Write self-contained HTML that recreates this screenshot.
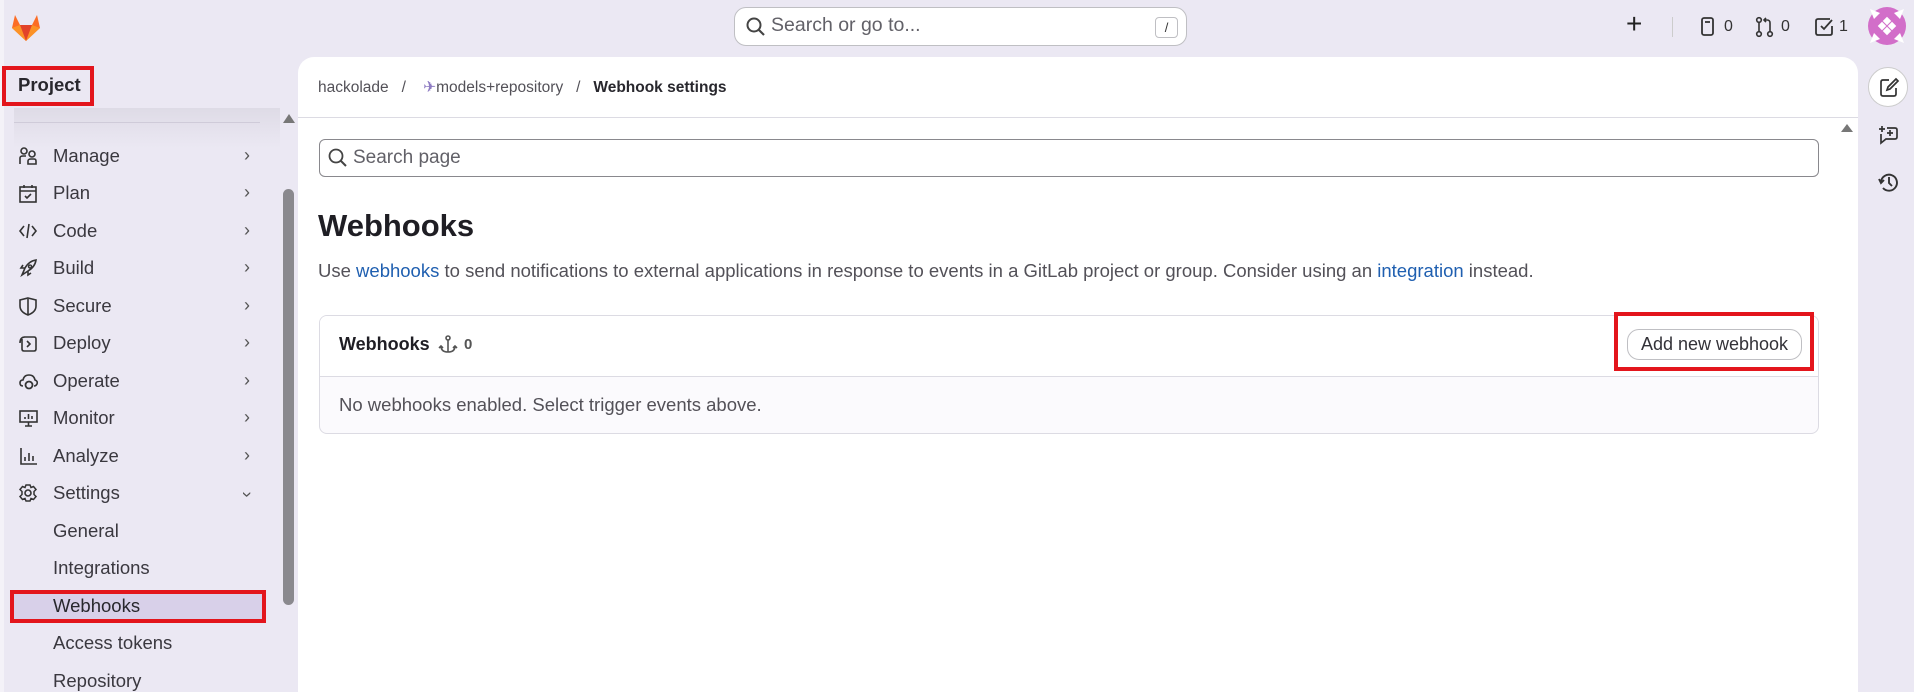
<!DOCTYPE html>
<html><head><meta charset="utf-8"><style>
*{box-sizing:border-box;margin:0;padding:0}
html,body{width:1914px;height:692px;overflow:hidden}
body{background:#ebe8f3;font-family:"Liberation Sans",sans-serif;color:#333238;position:relative}
.a{position:absolute}
.nav{font-size:18.5px;color:#3a383f;left:53px}
.ic{position:absolute;left:19px;width:20px;height:20px}
.chev{position:absolute;left:244px;font-size:18px;color:#555}
svg{overflow:visible}
</style></head><body>
<div class="a" style="left:0;top:0;width:4px;height:692px;background:#f4f2f8"></div>
<svg class="a" style="left:10px;top:11px" width="32" height="32" viewBox="0 0 32 32"><path d="M16 30 L2 17 L5 4 L10 14 H22 L27 4 L30 17 Z" fill="#fc6d26"/><path d="M16 30 L10 14 H22 Z" fill="#e24329"/><path d="M16 30 L2 17 L10 14Z" fill="#fca326" opacity=".7"/><path d="M16 30 L30 17 L22 14Z" fill="#fca326" opacity=".7"/></svg>
<div class="a" style="left:734px;top:7px;width:453px;height:39px;background:#fff;border:1px solid #bfbfc3;border-radius:12px"></div>
<svg class="a" style="left:746px;top:17px" width="20" height="20" viewBox="0 0 20 20"><circle cx="8" cy="8" r="6.5" fill="none" stroke="#444" stroke-width="2"/><path d="M13 13 L18 18" stroke="#444" stroke-width="2.2"/></svg>
<div class="a" style="left:771px;top:14px;font-size:19.5px;color:#626168">Search or go to...</div>
<div class="a" style="left:1155px;top:17px;width:23px;height:21px;border:1px solid #bfbfc3;border-radius:4px;font-size:13px;text-align:center;line-height:19px;color:#333">/</div>
<div class="a" style="left:1626px;top:8px;font-size:28px;color:#222">+</div>
<div class="a" style="left:1672px;top:17px;width:1px;height:20px;background:#ccc"></div>
<svg class="a" style="left:1701px;top:17px" width="14" height="20"><rect x="1" y="1" width="11" height="17" rx="2" fill="none" stroke="#333" stroke-width="1.8"/><path d="M4 5H9" stroke="#333" stroke-width="1.8"/></svg>
<div class="a" style="left:1724px;top:18px;font-size:16px;color:#333">0</div>
<svg class="a" style="left:1755px;top:17px" width="20" height="20"><circle cx="4" cy="3" r="2.3" fill="none" stroke="#333" stroke-width="1.6"/><circle cx="4" cy="17" r="2.3" fill="none" stroke="#333" stroke-width="1.6"/><circle cx="15" cy="17" r="2.3" fill="none" stroke="#333" stroke-width="1.6"/><path d="M4 5.5V14.5M15 14.5V6Q15 3 12 3H9M11 1L9 3 11 5" fill="none" stroke="#333" stroke-width="1.6"/></svg>
<div class="a" style="left:1781px;top:18px;font-size:16px;color:#333">0</div>
<svg class="a" style="left:1815px;top:17px" width="20" height="20"><path d="M17 9V16Q17 18 15 18H3Q1 18 1 16V4Q1 2 3 2H15" fill="none" stroke="#333" stroke-width="1.8"/><path d="M6 9L9 12 17 3" fill="none" stroke="#333" stroke-width="1.8"/></svg>
<div class="a" style="left:1839px;top:18px;font-size:16px;color:#333">1</div>
<svg class="a" style="left:1868px;top:7px" width="38" height="38" viewBox="0 0 38 38"><circle cx="19" cy="19" r="19" fill="#d26ec9"/><g fill="#fff"><path d="M2 2L12 6 6 12Z"/><path d="M36 2L26 6 32 12Z"/><path d="M2 36L12 32 6 26Z"/><path d="M36 36L26 32 32 26Z"/><rect x="16" y="11" width="6" height="6" transform="rotate(45 19 14)"/><rect x="16" y="21" width="6" height="6" transform="rotate(45 19 24)"/><rect x="11" y="16" width="6" height="6" transform="rotate(45 14 19)"/><rect x="21" y="16" width="6" height="6" transform="rotate(45 24 19)"/></g></svg>
<div class="a" style="left:2px;top:66px;width:92px;height:40px;border:4px solid #e3151c"></div>
<div class="a" style="left:18px;top:74px;font-size:18.5px;font-weight:bold;color:#28272d">Project</div>
<div class="a" style="left:14px;top:108px;width:266px;height:40px;background:linear-gradient(#dedbe6,#ebe8f3)"></div>
<div class="a" style="left:14px;top:122px;width:246px;height:1px;background:#cfcbd9"></div>
<div class="a" style="left:283px;top:114px;border-left:6px solid transparent;border-right:6px solid transparent;border-bottom:9px solid #777"></div>
<div class="a" style="left:283px;top:189px;width:11px;height:416px;background:#8a898e;border-radius:6px"></div>
<div class="a nav" style="top:145px">Manage</div><div class="chev" style="top:145px">›</div>
<div class="a nav" style="top:182px">Plan</div><div class="chev" style="top:182px">›</div>
<div class="a nav" style="top:220px">Code</div><div class="chev" style="top:220px">›</div>
<div class="a nav" style="top:257px">Build</div><div class="chev" style="top:257px">›</div>
<div class="a nav" style="top:295px">Secure</div><div class="chev" style="top:295px">›</div>
<div class="a nav" style="top:332px">Deploy</div><div class="chev" style="top:332px">›</div>
<div class="a nav" style="top:370px">Operate</div><div class="chev" style="top:370px">›</div>
<div class="a nav" style="top:407px">Monitor</div><div class="chev" style="top:407px">›</div>
<div class="a nav" style="top:445px">Analyze</div><div class="chev" style="top:445px">›</div>
<div class="a nav" style="top:482px">Settings</div><div class="chev" style="top:484px;transform:rotate(90deg)">›</div>
<div class="a nav" style="top:520px">General</div>
<div class="a nav" style="top:557px">Integrations</div>
<div class="a" style="left:10px;top:590px;width:256px;height:33px;border:4px solid #e3151c;background:#d8d0e9"></div>
<div class="a nav" style="top:595px;color:#28272d">Webhooks</div>
<div class="a nav" style="top:632px">Access tokens</div>
<div class="a nav" style="top:670px">Repository</div>
<svg class="ic" style="top:147px"><circle cx="5" cy="4" r="3" fill="none" stroke="#333" stroke-width="1.6"/><circle cx="13" cy="7" r="3" fill="none" stroke="#333" stroke-width="1.6"/><path d="M1 17V11Q1 9 4 9H7M9 17V14Q9 12 12 12H15Q17 12 17 14V17Z" fill="none" stroke="#333" stroke-width="1.6"/></svg>
<svg class="ic" style="top:184px"><rect x="1" y="3" width="16" height="15" fill="none" stroke="#333" stroke-width="1.6"/><path d="M1 7H17M5 1V4M13 1V4M6 12L8 14 12 10" fill="none" stroke="#333" stroke-width="1.6"/></svg>
<svg class="ic" style="top:222px"><path d="M5 4L1 9 5 14M13 4L17 9 13 14M10 2L8 16" fill="none" stroke="#333" stroke-width="1.6"/></svg>
<svg class="ic" style="top:259px"><path d="M3 16L6 9Q10 2 17 1Q16 8 9 12L3 16ZM11 6A1.5 1.5 0 1 0 11.1 6M6 9L2 9 4 6M9 12L9 16 12 14" fill="none" stroke="#333" stroke-width="1.6"/></svg>
<svg class="ic" style="top:297px"><path d="M9 1L17 3V9Q17 15 9 18Q1 15 1 9V3Z M9 2V17" fill="none" stroke="#333" stroke-width="1.6"/></svg>
<svg class="ic" style="top:334px"><path d="M3 5V15Q3 17 5 17H15Q17 17 17 15V5Q17 3 15 3H5M1 9Q1 3 6 3M8 7L11 10 8 13" fill="none" stroke="#333" stroke-width="1.6"/></svg>
<svg class="ic" style="top:372px"><path d="M4 14Q1 14 1 11Q1 8 4 8Q5 3 10 3Q15 3 16 8Q19 9 18 12Q17 14 15 14" fill="none" stroke="#333" stroke-width="1.6"/><circle cx="10" cy="13" r="3.5" fill="none" stroke="#333" stroke-width="1.8"/></svg>
<svg class="ic" style="top:409px"><rect x="1" y="2" width="17" height="11" fill="none" stroke="#333" stroke-width="1.6"/><path d="M6 17H13M9.5 13V17M6 10V8M9.5 10V5M13 10V7" fill="none" stroke="#333" stroke-width="1.6"/></svg>
<svg class="ic" style="top:447px"><path d="M2 1V17H18M6 14V10M10 14V6M14 14V9" fill="none" stroke="#333" stroke-width="1.6"/></svg>
<svg class="ic" style="top:484px"><circle cx="9" cy="9" r="3" fill="none" stroke="#333" stroke-width="1.6"/><path d="M7 1H11L12 3.5 14.5 2.5 17 5.5 15 7.5V10.5L17 12.5 14.5 15.5 12 14.5 11 17H7L6 14.5 3.5 15.5 1 12.5 3 10.5V7.5L1 5.5 3.5 2.5 6 3.5Z" fill="none" stroke="#333" stroke-width="1.5"/></svg>
<div class="a" style="left:298px;top:57px;width:1560px;height:635px;background:#fff;border-radius:16px 16px 0 0"></div>
<div class="a" style="left:318px;top:78px;font-size:15.5px;color:#535158">hackolade &nbsp;&nbsp;/&nbsp;&nbsp;&nbsp; <span style="color:#8e7cc3">✈</span>models+repository &nbsp;&nbsp;/&nbsp;&nbsp; <b style="color:#28272d">Webhook settings</b></div>
<div class="a" style="left:298px;top:117px;width:1560px;height:1px;background:#dcdbe3"></div>
<div class="a" style="left:1841px;top:124px;border-left:6px solid transparent;border-right:6px solid transparent;border-bottom:8px solid #777"></div>
<div class="a" style="left:319px;top:139px;width:1500px;height:38px;border:1px solid #89888d;border-radius:6px"></div>
<svg class="a" style="left:328px;top:148px" width="20" height="20"><circle cx="8" cy="8" r="6.5" fill="none" stroke="#444" stroke-width="1.8"/><path d="M13 13L18 18" stroke="#444" stroke-width="2"/></svg>
<div class="a" style="left:353px;top:147px;font-size:19px;color:#626168">Search page</div>
<div class="a" style="left:318px;top:208px;font-size:31px;font-weight:bold;color:#1f1e24">Webhooks</div>
<div class="a" style="left:318px;top:260px;font-size:18.5px;color:#535158">Use <span style="color:#1f5fb0">webhooks</span> to send notifications to external applications in response to events in a GitLab project or group. Consider using an <span style="color:#1f5fb0">integration</span> instead.</div>
<div class="a" style="left:319px;top:315px;width:1500px;height:119px;border:1px solid #dcdbe3;border-radius:8px;background:#fbfafd;overflow:hidden"><div style="height:61px;background:#fff;border-bottom:1px solid #dcdbe3"></div></div>
<div class="a" style="left:339px;top:334px;font-size:18px;font-weight:bold;color:#1f1e24">Webhooks</div>
<svg class="a" style="left:439px;top:335px" width="18" height="20"><circle cx="9" cy="3" r="2" fill="none" stroke="#555" stroke-width="1.6"/><path d="M9 5V17M2 11Q2 17 9 17Q16 17 16 11M0 13L2 11 4 13M14 13L16 11 18 13" fill="none" stroke="#555" stroke-width="1.6"/></svg>
<div class="a" style="left:464px;top:336px;font-size:15px;font-weight:bold;color:#555">0</div>
<div class="a" style="left:339px;top:394px;font-size:18.5px;color:#535158">No webhooks enabled. Select trigger events above.</div>
<div class="a" style="left:1614px;top:312px;width:200px;height:59px;border:4px solid #e3151c"></div>
<div class="a" style="left:1627px;top:329px;width:175px;height:31px;border:1px solid #bfbfc3;border-radius:12px;font-size:18px;text-align:center;line-height:29px;color:#333238;white-space:nowrap">Add new webhook</div>
<div class="a" style="left:1868px;top:67px;width:40px;height:40px;border:1px solid #ccc;border-radius:50%;background:#fff"></div>
<svg class="a" style="left:1880px;top:78px" width="20" height="20"><path d="M9 2H3Q1 2 1 4V16Q1 18 3 18H14Q16 18 16 16V10M7 12L8 9 16 1 18 3 10 11Z" fill="none" stroke="#333" stroke-width="1.7"/></svg>
<svg class="a" style="left:1878px;top:125px" width="22" height="22"><path d="M9 3H17Q19 3 19 5V12Q19 14 17 14H8L3 18V9" fill="none" stroke="#333" stroke-width="1.7"/><path d="M4 1V7M1 4H7M12 5V11M9 8H15" stroke="#333" stroke-width="1.7"/></svg>
<svg class="a" style="left:1878px;top:172px" width="22" height="22"><path d="M3 10A8 8 0 1 1 5 16M1 7L3 11 6 8M11 5V11L14 14" fill="none" stroke="#333" stroke-width="1.9"/></svg>
</body></html>
